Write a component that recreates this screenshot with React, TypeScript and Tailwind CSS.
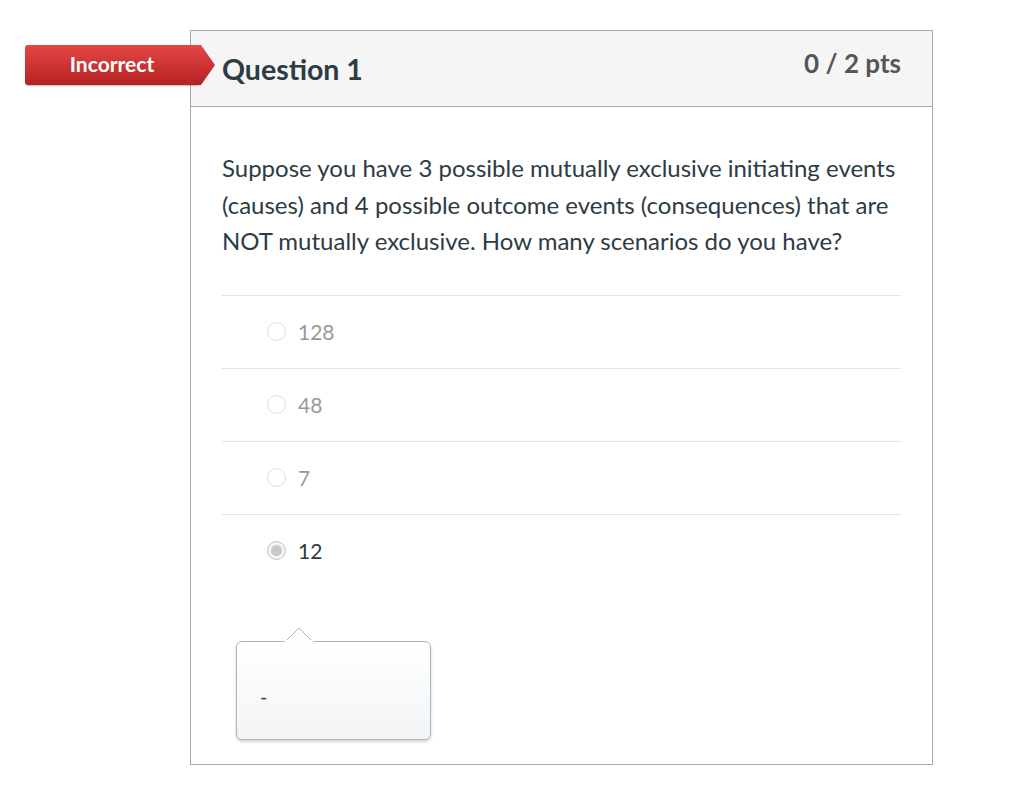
import React from "react";

const answers = [
  { label: "128", selected: false },
  { label: "48", selected: false },
  { label: "7", selected: false },
  { label: "12", selected: true },
];

export default function App() {
  return (
    <div className="relative min-h-[793px] w-[1015px] bg-white" style={{ fontFamily: "Lato, 'Noto Sans', sans-serif" }}>
      <div className="pt-[30px] pl-[190px]">
        <div className="relative w-[743px] border border-[#a9a9a9] bg-white">
          {/* Incorrect badge */}
          <div className="absolute left-[-166px] top-[14px] flex h-[40px] items-center">
            <div className="flex h-[40px] w-[174px] items-center justify-center rounded-l-[3px] bg-gradient-to-b from-[#e54646] to-[#b52222] pb-[2px] text-[21px] font-bold text-white shadow-[0_1px_1px_rgba(0,0,0,0.25)]">
              Incorrect
            </div>
            <svg width="16" height="40" viewBox="0 0 16 40" className="block">
              <defs>
                <linearGradient id="g" x1="0" y1="0" x2="0" y2="1">
                  <stop offset="0" stopColor="#e54646" />
                  <stop offset="1" stopColor="#b52222" />
                </linearGradient>
              </defs>
              <polygon points="0,0 2,0 16,20 2,40 0,40" fill="url(#g)" />
            </svg>
          </div>

          {/* Header */}
          <div className="flex h-[76px] items-start justify-between border-b border-[#a9a9a9] bg-[#f5f5f5] pl-[31px] pr-[31px]">
            <div className="pt-[20px] text-[28.5px] font-bold leading-[36px] text-[#2d3b45]">Question 1</div>
            <div className="pt-[17px] text-[26px] font-bold leading-[30px] text-[#555555]">0 / 2 pts</div>
          </div>

          {/* Body */}
          <div className="px-[31px] pt-[43px] pb-[24px]">
            <p className="text-[24px] leading-[36.5px] text-[#2d3b45]">
              Suppose you have 3 possible mutually exclusive initiating events (causes) and 4 possible outcome events (consequences) that are NOT mutually exclusive. How many scenarios do you have?
            </p>
            <div className="mt-[35px]">
              {answers.map((a) => (
                <div key={a.label} className="flex h-[73px] items-center border-t border-[#e3e3e3] pl-[45px]">
                  <span
                    className={`flex h-[19px] w-[19px] items-center justify-center rounded-full border ${
                      a.selected ? "border-[#c4c4c4] bg-[#f4f4f4]" : "border-[#dedede] bg-white"
                    }`}
                  >
                    {a.selected && <span className="h-[11px] w-[11px] rounded-full bg-[#c9c9c9]" />}
                  </span>
                  <span className={`ml-[12px] text-[21px] ${a.selected ? "text-[#2d3b45]" : "text-[#999999]"}`}>{a.label}</span>
                </div>
              ))}
            </div>

            {/* Popover */}
            <div className="relative ml-[14px] mt-[54px] w-[195px]">
              <svg width="30" height="16" viewBox="0 0 30 16" className="absolute left-[48px] top-[-14px]">
                <polygon points="1,15 15,1 29,15" fill="#ffffff" stroke="#aab6c1" strokeWidth="1" />
                <rect x="0" y="14.5" width="30" height="2" fill="#ffffff" />
              </svg>
              <div className="h-[99px] rounded-[6px] border border-[#aab6c1] bg-gradient-to-b from-white to-[#f2f4f6] shadow-[0_2px_3px_rgba(0,0,0,0.18)]">
                <div className="pl-[23px] pt-[42px] text-[20px] leading-[24px] text-[#2d3b45]">-</div>
              </div>
              <svg width="30" height="3" viewBox="0 0 30 3" className="absolute left-[48px] top-[-1px]">
                <rect x="1.5" y="0" width="27" height="3" fill="#ffffff" />
              </svg>
            </div>
          </div>
        </div>
      </div>
    </div>
  );
}
